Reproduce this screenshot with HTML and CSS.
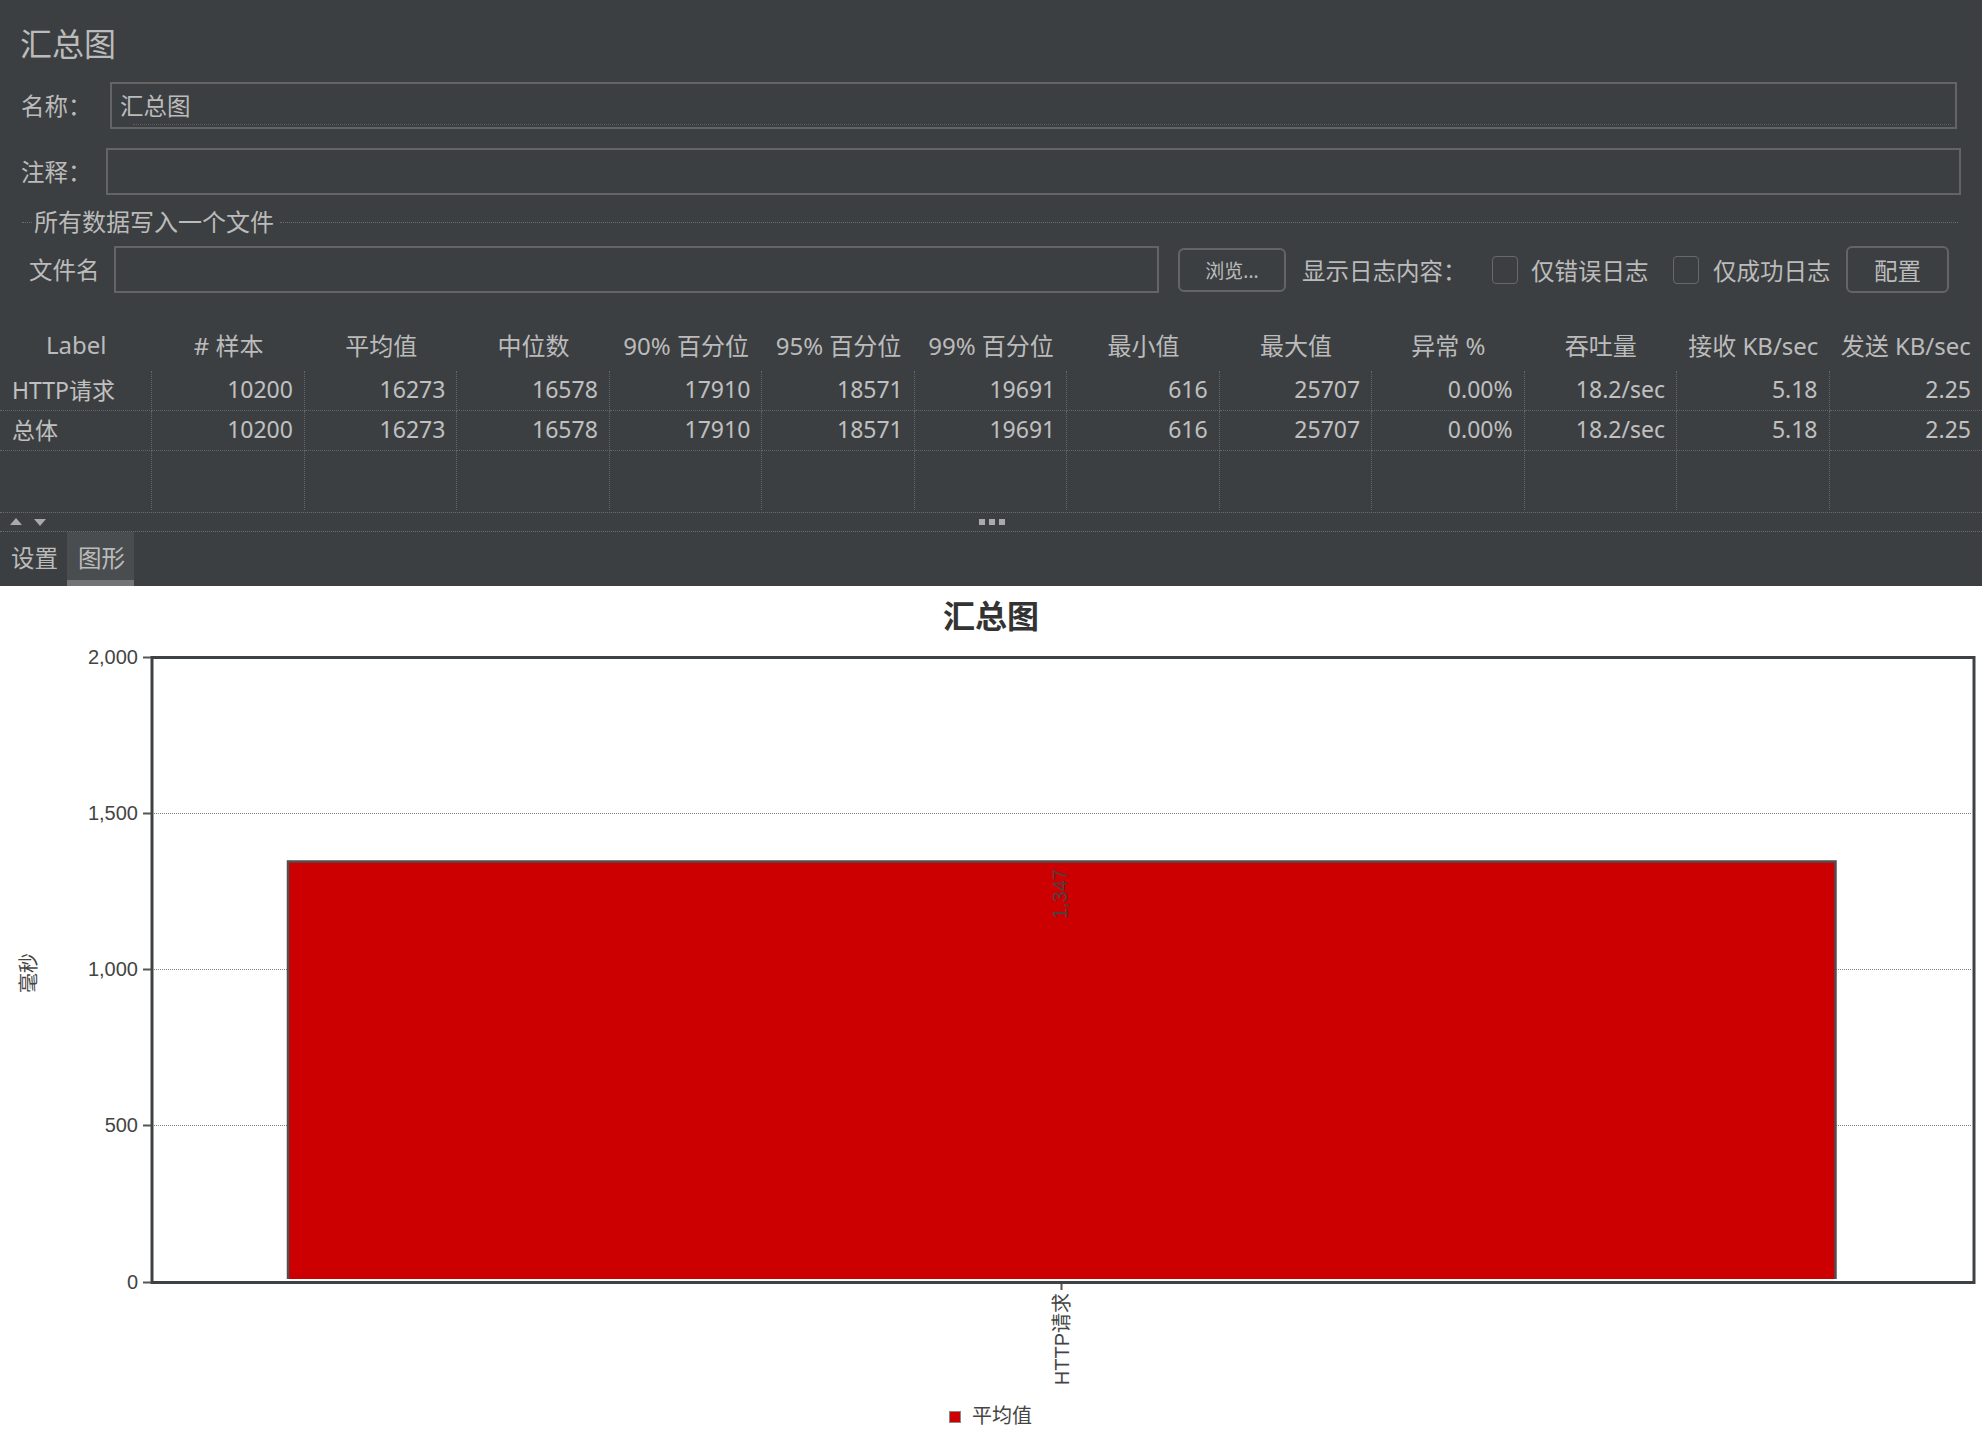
FILE: index.html
```html
<!DOCTYPE html>
<html lang="zh-CN">
<head>
<meta charset="utf-8">
<title>汇总图</title>
<link rel="stylesheet" href="styles.css">
</head>
<body>
<div class="top">
  <div class="title">汇总图</div>
  <div class="form-row row-name">
    <div class="field-label">名称：</div>
    <div class="input name-input"><span>汇总图</span></div>
  </div>
  <div class="form-row row-comment">
    <div class="field-label">注释：</div>
    <div class="input"></div>
  </div>
  <div class="legend">
    <span class="seg short"></span>
    <span class="legend-text">所有数据写入一个文件</span>
    <span class="seg long"></span>
  </div>
  <div class="form-row file-row">
    <div class="field-label">文件名</div>
    <div class="input file-input"></div>
    <div class="btn browse">浏览...</div>
    <div class="log-label">显示日志内容：</div>
    <div class="checkbox"></div>
    <div class="cb-text t1">仅错误日志</div>
    <div class="checkbox"></div>
    <div class="cb-text t2">仅成功日志</div>
    <div class="btn config">配置</div>
  </div>

  <div class="table">
    <div class="thead">
      <div>Label</div><div># 样本</div><div>平均值</div><div>中位数</div><div>90% 百分位</div><div>95% 百分位</div><div>99% 百分位</div><div>最小值</div><div>最大值</div><div>异常 %</div><div>吞吐量</div><div>接收 KB/sec</div><div>发送 KB/sec</div>
    </div>
    <div class="tr">
      <div class="lab">HTTP请求</div><div>10200</div><div>16273</div><div>16578</div><div>17910</div><div>18571</div><div>19691</div><div>616</div><div>25707</div><div>0.00%</div><div>18.2/sec</div><div>5.18</div><div>2.25</div>
    </div>
    <div class="tr">
      <div class="lab">总体</div><div>10200</div><div>16273</div><div>16578</div><div>17910</div><div>18571</div><div>19691</div><div>616</div><div>25707</div><div>0.00%</div><div>18.2/sec</div><div>5.18</div><div>2.25</div>
    </div>
    <div class="tr filler">
      <div></div><div></div><div></div><div></div><div></div><div></div><div></div><div></div><div></div><div></div><div></div><div></div><div></div>
    </div>
  </div>

  <div class="splitter">
    <div class="arrows">
      <svg width="40" height="10" viewBox="0 0 40 10"><polygon points="0,8 6,1 12,8" fill="#a9a9a9"/><polygon points="24,2 36,2 30,9" fill="#a9a9a9"/></svg>
    </div>
    <div class="grip">
      <svg width="26" height="6" viewBox="0 0 26 6"><rect x="0" y="0" width="6" height="6" fill="#a9a9a9"/><rect x="10" y="0" width="6" height="6" fill="#a9a9a9"/><rect x="20" y="0" width="6" height="6" fill="#a9a9a9"/></svg>
    </div>
  </div>

  <div class="tabs">
    <div class="tab">设置</div>
    <div class="tab active">图形</div>
  </div>
</div>

<svg class="chart" width="1982" height="864" viewBox="0 586 1982 864">
  <text class="chart-title" x="991" y="628" text-anchor="middle">汇总图</text>

  <line class="grid" x1="154" x2="1972" y1="813.5" y2="813.5"/>
  <line class="grid" x1="154" x2="1972" y1="969.5" y2="969.5"/>
  <line class="grid" x1="154" x2="1972" y1="1125.5" y2="1125.5"/>

  <rect x="288" y="862" width="1547" height="417" fill="#cc0000"/>
  <path d="M288 1279 V861.5 H1835.5 V1279" fill="none" stroke="#505050" stroke-width="2.5"/>

  <rect x="152" y="657.5" width="1822" height="625" fill="none" stroke="#3f4245" stroke-width="3"/>

  <line class="tick" x1="143" x2="151" y1="657.5" y2="657.5"/>
  <line class="tick" x1="143" x2="151" y1="813.5" y2="813.5"/>
  <line class="tick" x1="143" x2="151" y1="969.5" y2="969.5"/>
  <line class="tick" x1="143" x2="151" y1="1125.5" y2="1125.5"/>
  <line class="tick" x1="143" x2="151" y1="1282.5" y2="1282.5"/>
  <line class="tick" x1="1061.5" x2="1061.5" y1="1284" y2="1290"/>

  <text class="axis" x="138" y="664" text-anchor="end">2,000</text>
  <text class="axis" x="138" y="820" text-anchor="end">1,500</text>
  <text class="axis" x="138" y="976" text-anchor="end">1,000</text>
  <text class="axis" x="138" y="1132" text-anchor="end">500</text>
  <text class="axis" x="138" y="1289" text-anchor="end">0</text>

  <text class="axis" transform="translate(36 973) rotate(-90)" text-anchor="middle">毫秒</text>
  <text class="axis" transform="translate(1067 869) rotate(-90)" text-anchor="end">1,347</text>
  <text class="axis" transform="translate(1069 1293) rotate(-90)" text-anchor="end">HTTP请求</text>

  <rect x="949.5" y="1411.5" width="11" height="11" fill="#cc0000" stroke="#8a8a8a" stroke-width="1"/>
  <text class="axis" x="972" y="1423">平均值</text>
</svg>
</body>
</html>
```

FILE: styles.css
```css
* { box-sizing: border-box; }
html, body { margin: 0; padding: 0; }
body {
  width: 1982px;
  height: 1450px;
  overflow: hidden;
  background: #ffffff;
  font-family: "Noto Sans", "Noto Sans CJK SC", sans-serif;
}

.top {
  background: #3c3f41;
  color: #bbbbbb;
  height: 586px;
  font-size: 23.5px;
}

.title {
  height: 82px;
  padding: 28px 0 0 20px;
  font-size: 32px;
  line-height: 32px;
}

.form-row {
  display: flex;
  align-items: center;
  height: 47px;
}
.field-label { flex: none; line-height: 24px; }

.input {
  flex: none;
  height: 47px;
  border: 2px solid #646464;
  background: #3c3f41;
}

.row-name { padding-left: 21px; }
.row-name .field-label { width: 89px; }
.row-name .input { width: 1847px; }

.name-input {
  position: relative;
  display: flex;
  align-items: center;
  padding-left: 8px;
  padding-bottom: 2px;
}
.name-input::after {
  content: "";
  position: absolute;
  left: 21px;
  right: 4px;
  bottom: 2px;
  border-bottom: 1px dotted #5c5f61;
}

.row-comment { margin-top: 19px; padding-left: 21px; }
.row-comment .field-label { width: 85px; }
.row-comment .input { width: 1855px; }

.legend {
  display: flex;
  align-items: center;
  height: 24px;
  margin: 15px 24px 12px 22px;
  line-height: 24px;
  font-size: 24px;
}
.seg { height: 0; border-top: 1px dotted #6b6b6b; }
.seg.short { width: 10px; margin-right: 2px; }
.seg.long { flex: 1; margin-left: 6px; }

.file-row { padding-left: 29px; }
.file-row .field-label { width: 85px; }
.file-input { width: 1045px; }

.btn {
  flex: none;
  display: flex;
  align-items: center;
  justify-content: center;
  border: 2px solid #646464;
  border-radius: 6px;
}
.browse {
  width: 108px;
  height: 44px;
  margin-left: 19px;
  font-size: 19px;
}
.log-label { flex: none; width: 190px; margin-left: 16px; }
.checkbox {
  flex: none;
  width: 26px;
  height: 28px;
  border: 1px solid #686868;
  border-radius: 4px;
}
.cb-text { flex: none; }
.cb-text.t1 { width: 142px; margin-left: 13px; }
.cb-text.t2 { width: 133px; margin-left: 14px; }
.config { width: 103px; height: 47px; }

.table { margin-top: 27px; }
.thead, .tr {
  display: grid;
  grid-template-columns: repeat(13, 1fr);
}
.thead { height: 51px; font-size: 24px; }
.thead > div {
  display: flex;
  align-items: center;
  justify-content: center;
  padding-bottom: 2px;
  white-space: nowrap;
}
.tr { height: 40px; font-size: 23px; color: #c0c0c0; }
.tr > div {
  display: flex;
  align-items: center;
  justify-content: flex-end;
  padding-right: 11px;
  padding-bottom: 4px;
  border-bottom: 1px dotted #646668;
  border-right: 1px dotted #646668;
  white-space: nowrap;
}
.tr > div:last-child { border-right: none; }
.tr > div.lab { justify-content: flex-start; padding-left: 12px; }
.tr.filler { height: 59px; }
.tr.filler > div { border-bottom: none; }

.splitter {
  margin-top: 2px;
  height: 20px;
  border-top: 1px dotted #6b6b6b;
  border-bottom: 1px dotted #6b6b6b;
  display: flex;
  align-items: center;
}
.arrows { width: 979px; padding-left: 10px; display: flex; align-items: center; }
.arrows svg, .grip svg { display: block; }
.grip { display: flex; align-items: center; }

.tabs { display: flex; height: 54px; }
.tab {
  height: 54px;
  padding: 4px 9px 0 11px;
  line-height: 44px;
  border-bottom: 6px solid transparent;
}
.tab.active {
  background: #4a4d4f;
  border-bottom-color: #747474;
}

.chart { display: block; }
.chart-title {
  font-family: "Noto Sans CJK SC", "Liberation Sans", sans-serif;
  font-size: 32px;
  font-weight: bold;
  fill: #333333;
}
.axis {
  font-family: "Liberation Sans", "Noto Sans CJK SC", sans-serif;
  font-size: 20px;
  fill: #444444;
}
.grid { stroke: #808080; stroke-width: 1; stroke-dasharray: 1 1; }
.tick { stroke: #555555; stroke-width: 2; }
```
